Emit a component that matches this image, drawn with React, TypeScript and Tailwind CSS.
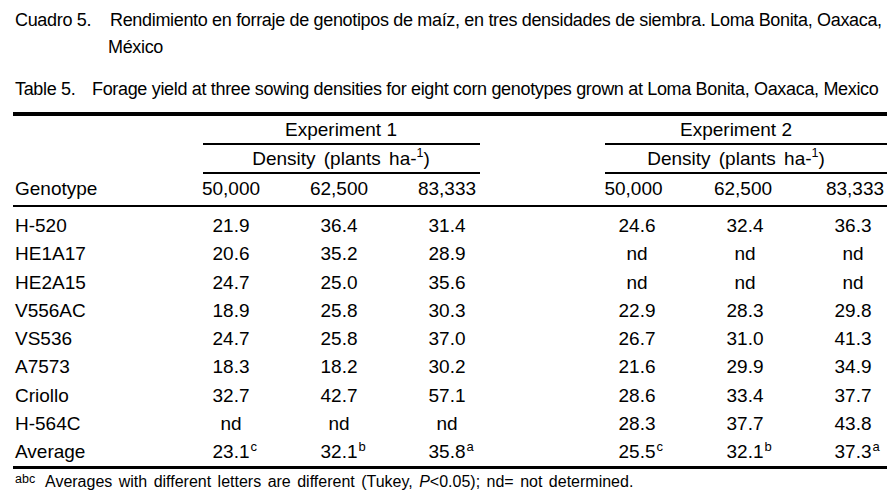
type Row = {
  genotype: string;
  exp1: string[];
  exp2: string[];
};

const ROWS: Row[] = [
  { genotype: "H-520", exp1: ["21.9", "36.4", "31.4"], exp2: ["24.6", "32.4", "36.3"] },
  { genotype: "HE1A17", exp1: ["20.6", "35.2", "28.9"], exp2: ["nd", "nd", "nd"] },
  { genotype: "HE2A15", exp1: ["24.7", "25.0", "35.6"], exp2: ["nd", "nd", "nd"] },
  { genotype: "V556AC", exp1: ["18.9", "25.8", "30.3"], exp2: ["22.9", "28.3", "29.8"] },
  { genotype: "VS536", exp1: ["24.7", "25.8", "37.0"], exp2: ["26.7", "31.0", "41.3"] },
  { genotype: "A7573", exp1: ["18.3", "18.2", "30.2"], exp2: ["21.6", "29.9", "34.9"] },
  { genotype: "Criollo", exp1: ["32.7", "42.7", "57.1"], exp2: ["28.6", "33.4", "37.7"] },
  { genotype: "H-564C", exp1: ["nd", "nd", "nd"], exp2: ["28.3", "37.7", "43.8"] },
];

const AVERAGES = {
  exp1: [
    ["23.1", "c"],
    ["32.1", "b"],
    ["35.8", "a"],
  ],
  exp2: [
    ["25.5", "c"],
    ["32.1", "b"],
    ["37.3", "a"],
  ],
};

const DENSITIES = ["50,000", "62,500", "83,333"];

const GRID =
  "grid grid-cols-[164px_108px_108px_108px_82px_108px_108px_108px] items-center";

function Density() {
  return (
    <span className="[word-spacing:3px]">
      Density (plants ha-<sup className="relative -top-[1px] text-[12.5px] leading-none align-super">1</sup>)
    </span>
  );
}

function Cell({ value, sup }: { value: string; sup?: string }) {
  return (
    <div className="text-center">
      <span className="relative">
        {value}
        {sup && (
          <span className="absolute left-full top-[-1px] ml-[1px] text-[13px] leading-none">
            {sup}
          </span>
        )}
      </span>
    </div>
  );
}

export default function App() {
  return (
    <div className="h-[498px] w-[896px] overflow-hidden bg-white text-black font-['Liberation_Sans',Arial,sans-serif]">
      {/* captions */}
      <div className="pl-[15px] pt-[7px] text-[18px] leading-[27px] tracking-[-0.33px]">
        <div className="flex">
          <div className="w-[95px] shrink-0">Cuadro 5.</div>
          <div>
            Rendimiento en forraje de genotipos de maíz, en tres densidades de siembra. Loma Bonita, Oaxaca,
            <br />
            <span className="-ml-[2px]">México</span>
          </div>
        </div>
        <div className="mt-[15px] flex">
          <div className="w-[77px] shrink-0">Table 5.</div>
          <div>Forage yield at three sowing densities for eight corn genotypes grown at Loma Bonita, Oaxaca, Mexico</div>
        </div>
      </div>

      {/* table */}
      <div className="ml-[13px] mt-[9px] w-[874px] text-[19px]">
        <div className="h-[4px] bg-black" />

        <div className={`${GRID} h-[27px]`}>
          <div className="col-start-2 col-span-3 text-center pl-[4px]">Experiment 1</div>
          <div className="col-start-6 col-span-3 text-center pl-[2px] pr-[20px]">Experiment 2</div>
        </div>

        <div className={`${GRID}`}>
          <div className="col-start-2 col-span-3 ml-[26px] mr-[21px] h-[2px] bg-black" />
          <div className="col-start-6 col-span-3 ml-[22px] mr-[20px] h-[2px] bg-black" />
        </div>

        <div className={`${GRID} h-[27px]`}>
          <div className="col-start-2 col-span-3 text-center pl-[4px]">
            <Density />
          </div>
          <div className="col-start-6 col-span-3 text-center pl-[2px] pr-[20px]">
            <Density />
          </div>
        </div>

        <div className={`${GRID}`}>
          <div className="col-start-2 col-span-3 ml-[26px] mr-[21px] h-[2px] bg-black" />
          <div className="col-start-6 col-span-3 ml-[22px] mr-[20px] h-[2px] bg-black" />
        </div>

        <div className={`${GRID} h-[31px]`}>
          <div className="pl-[2px]">Genotype</div>
          {DENSITIES.map((d) => (
            <Cell key={"a" + d} value={d} />
          ))}
          <div />
          {DENSITIES.map((d, i) => (
            <div key={"b" + d} className={i === 0 ? "text-center pr-[7px]" : i === 2 ? "text-center pl-[4px]" : "text-center pr-[4px]"}>
              {d}
            </div>
          ))}
        </div>

        <div className="h-[2px] bg-black" />

        <div className="pt-[5px]">
          {ROWS.map((r) => (
            <div key={r.genotype} className={`${GRID} h-[28.25px]`}>
              <div className="pl-[2px]">{r.genotype}</div>
              {r.exp1.map((v, i) => (
                <Cell key={i} value={v} />
              ))}
              <div />
              {r.exp2.map((v, i) => (
                <Cell key={i} value={v} />
              ))}
            </div>
          ))}
          <div className={`${GRID} h-[28.25px]`}>
            <div className="pl-[2px]">Average</div>
            {AVERAGES.exp1.map(([v, s], i) => (
              <Cell key={i} value={v} sup={s} />
            ))}
            <div />
            {AVERAGES.exp2.map(([v, s], i) => (
              <Cell key={i} value={v} sup={s} />
            ))}
          </div>
        </div>

        <div className="h-[3px] bg-black" />

        <div className="flex h-[26px] items-center text-[16px]">
          <span className="w-[32px] shrink-0 pl-[2px] text-[12.5px] leading-none -mt-[6px]">abc</span>
          <span className="[word-spacing:2px]">
            Averages with different letters are different (Tukey, <i>P</i>&lt;0.05); nd= not determined.
          </span>
        </div>
      </div>
    </div>
  );
}
